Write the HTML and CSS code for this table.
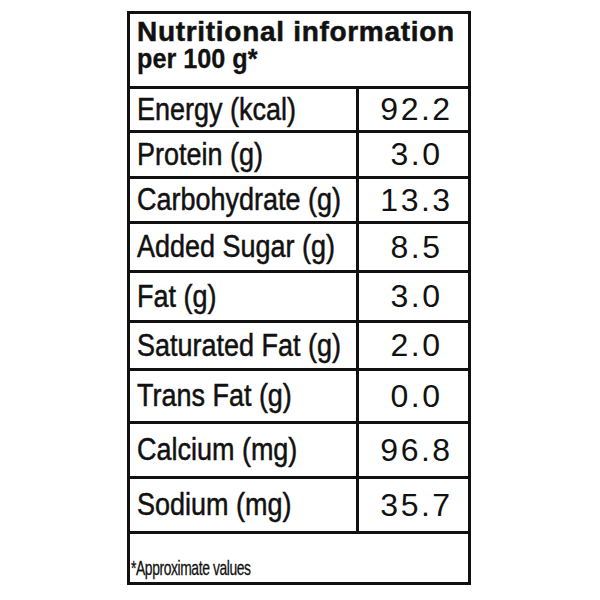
FILE: index.html
```html
<!DOCTYPE html>
<html>
<head>
<meta charset="utf-8">
<link rel="stylesheet" href="styles.css">
</head>
<body>
<div class="panel">
  <div class="head">
    <div class="title">Nutritional information</div>
    <div class="sub"><span class="squeeze-sub">per 100 g*</span></div>
  </div>
  <div class="row r44"><div class="label"><span class="squeeze">Energy (kcal)</span></div><div class="val">92.2</div></div>
  <div class="row r46"><div class="label"><span class="squeeze">Protein (g)</span></div><div class="val">3.0</div></div>
  <div class="row r45"><div class="label"><span class="squeeze">Carbohydrate (g)</span></div><div class="val">13.3</div></div>
  <div class="row r49"><div class="label"><span class="squeeze">Added Sugar (g)</span></div><div class="val">8.5</div></div>
  <div class="row r50"><div class="label"><span class="squeeze">Fat (g)</span></div><div class="val">3.0</div></div>
  <div class="row r48"><div class="label"><span class="squeeze">Saturated Fat (g)</span></div><div class="val">2.0</div></div>
  <div class="row r53"><div class="label"><span class="squeeze">Trans Fat (g)</span></div><div class="val">0.0</div></div>
  <div class="row r55"><div class="label"><span class="squeeze">Calcium (mg)</span></div><div class="val">96.8</div></div>
  <div class="row r55"><div class="label"><span class="squeeze">Sodium (mg)</span></div><div class="val">35.7</div></div>
  <div class="foot"><span class="squeeze-foot">*Approximate values</span></div>
</div>
</body>
</html>
```
FILE: styles.css
```css
html, body {
  margin: 0;
  padding: 0;
  background: #fff;
}
body {
  color: #111;
  font-family: "Liberation Sans", Arial, sans-serif;
}
.panel {
  margin: 11px 0 0 127px;
  width: 344px;
  border: 3px solid #111;
  box-sizing: border-box;
}
.head {
  height: 75px;
  box-sizing: border-box;
  border-bottom: 3px solid #111;
  padding: 4px 0 0 7px;
}
.title {
  font-family: "Liberation Sans", Arial, sans-serif;
  font-weight: bold;
  font-size: 28px;
  line-height: 27px;
  letter-spacing: 0.7px;
  white-space: nowrap;
  -webkit-text-stroke: 0.5px #111;
}
.sub {
  font-family: "Liberation Sans", Arial, sans-serif;
  font-weight: bold;
  font-size: 28px;
  line-height: 27px;
  white-space: nowrap;
  -webkit-text-stroke: 0.3px #111;
}
.squeeze-sub {
  display: inline-block;
  transform: scaleX(0.9);
  transform-origin: left center;
}
.row {
  display: grid;
  grid-template-columns: 229px 1fr;
  box-sizing: border-box;
  border-bottom: 3px solid #111;
}
.r44 { height: 44px; }
.r45 { height: 45px; }
.r46 { height: 46px; }
.r48 { height: 48px; }
.r49 { height: 49px; }
.r50 { height: 50px; }
.r53 { height: 53px; }
.r55 { height: 55px; }
.label {
  border-right: 3px solid #111;
  display: flex;
  align-items: center;
  padding-left: 7px;
  font-family: "Liberation Sans", Arial, sans-serif;
  font-size: 31px;
  white-space: nowrap;
  overflow: hidden;
}
.squeeze {
  display: inline-block;
  transform: scaleX(0.87);
  transform-origin: left center;
  -webkit-text-stroke: 0.5px #111;
}
.val {
  display: flex;
  align-items: center;
  justify-content: center;
  font-family: "Liberation Sans", Arial, sans-serif;
  font-size: 32px;
  letter-spacing: 2.5px;
  padding-left: 6px;
}
.foot {
  height: 48px;
  display: flex;
  align-items: flex-end;
  padding: 0 0 2px 1px;
  box-sizing: border-box;
  font-family: "Liberation Sans", Arial, sans-serif;
  font-size: 21px;
  white-space: nowrap;
}
.squeeze-foot {
  display: inline-block;
  transform: scaleX(0.66);
  transform-origin: left center;
  letter-spacing: -0.6px;
  -webkit-text-stroke: 0.3px #111;
}
```
